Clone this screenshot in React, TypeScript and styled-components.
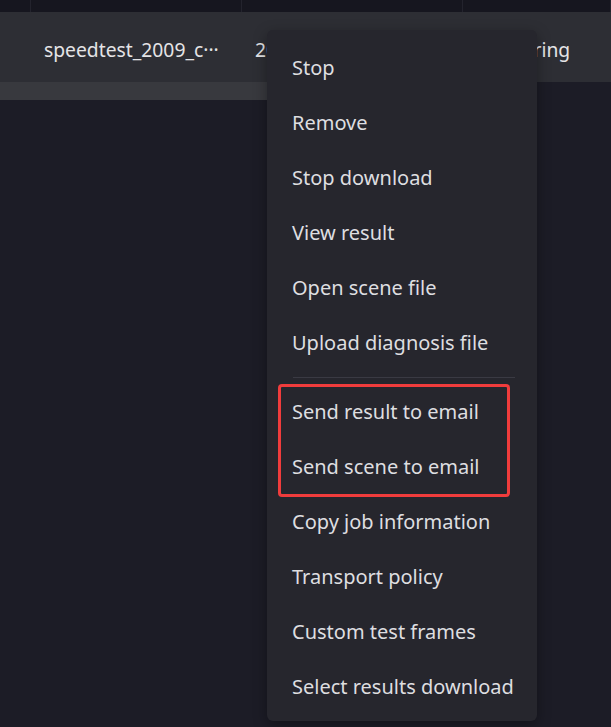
import React from 'react'
import styled, { createGlobalStyle } from 'styled-components'

const GlobalStyle = createGlobalStyle`
    html, body {
        margin: 0;
        padding: 0;
        background: #1c1c26;
        font-family: "Noto Sans", "Liberation Sans", sans-serif;
    }
`

interface Column {
    width: number;
    text: string;
}

const columns: Column[] = [
    { width: 31, text: '' },
    { width: 211, text: 'speedtest_2009_c···' },
    { width: 221, text: '2022-09-14 10:32:07' },
    { width: 148, text: 'Rendering' },
]

const menuItems: string[][] = [
    ['Stop', 'Remove', 'Stop download', 'View result', 'Open scene file', 'Upload diagnosis file'],
    ['Send result to email', 'Send scene to email'],
    ['Copy job information', 'Transport policy', 'Custom test frames', 'Select results download'],
]

const App: React.FC = () => {
    return (
        <Page>
            <GlobalStyle />
            <HeaderStrip>
                {columns.map((c, i) => (
                    <HeaderCell key={i} $w={c.width} />
                ))}
            </HeaderStrip>
            <JobRow>
                {columns.map((c, i) => (
                    <JobCell key={i} $w={c.width}>{c.text}</JobCell>
                ))}
            </JobRow>
            <ScrollTrack>
                <ScrollThumb />
            </ScrollTrack>

            <ContextMenu>
                {menuItems[0].map(label => (
                    <MenuItem key={label}>{label}</MenuItem>
                ))}
                <Divider />
                <Highlight>
                    {menuItems[1].map(label => (
                        <MenuItem key={label}>{label}</MenuItem>
                    ))}
                </Highlight>
                {menuItems[2].map(label => (
                    <MenuItem key={label}>{label}</MenuItem>
                ))}
            </ContextMenu>
        </Page>
    )
}

const Page = styled.div`
    position: relative;
    width: 611px;
    height: 727px;
    overflow: hidden;
    background: #1c1c26;
`
const HeaderStrip = styled.div`
    display: flex;
    height: 12px;
    background: #16161f;
`
const HeaderCell = styled.div<{ $w: number }>`
    flex: 0 0 ${p => p.$w}px;
    border-right: 1px solid #23232d;
    box-sizing: border-box;
`
const JobRow = styled.div`
    display: flex;
    align-items: center;
    height: 70px;
    background: #2d2e34;
`
const JobCell = styled.div<{ $w: number }>`
    flex: 0 0 ${p => p.$w}px;
    box-sizing: border-box;
    padding: 4px 13px 0;
    white-space: nowrap;
    overflow: hidden;
    font-size: 19.3px;
    color: #e4e4e6;
`
const ScrollTrack = styled.div`
    height: 18px;
    background: #1c1c26;
`
const ScrollThumb = styled.div`
    width: 300px;
    height: 100%;
    background: #38393e;
`
const ContextMenu = styled.div`
    position: absolute;
    top: 30px;
    left: 267px;
    width: 270px;
    box-sizing: border-box;
    padding: 10px 0 7px;
    background: #26262d;
    border-radius: 6px;
    box-shadow: 0 4px 14px rgba(0, 0, 0, 0.35);
`
const MenuItem = styled.div`
    height: 55px;
    line-height: 55px;
    padding-left: 25px;
    font-size: 20px;
    color: #dedee0;
    white-space: nowrap;
    cursor: pointer;
`
const Divider = styled.div`
    height: 1px;
    margin: 7px 22px 6px 26px;
    background: #3a3a43;
`
const Highlight = styled.div`
    position: relative;
    &::after {
        content: '';
        position: absolute;
        top: 0;
        bottom: -3px;
        left: 11px;
        right: 27px;
        border: 3px solid #f03c3c;
        border-radius: 4px;
        pointer-events: none;
    }
`

export default App
